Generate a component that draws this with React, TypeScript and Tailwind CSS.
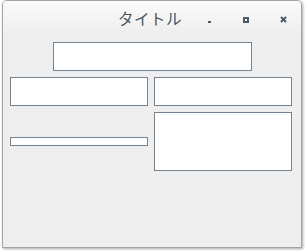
export default function App() {
  const field = 'bg-white border border-[#75828f]';
  return (
    <div className="w-[305px] h-[251px] bg-white" style={{ fontFamily: '"Noto Sans CJK JP", "Noto Sans", sans-serif' }}>
      <div className="ml-[2px] w-[300px] h-[248px] rounded-t-[5px] border border-[#a3a3a3] bg-[#eeeeee] shadow-[1px_1px_3px_rgba(0,0,0,0.35)] flex flex-col overflow-hidden">
        {/* title bar */}
        <div className="h-[34px] shrink-0 flex items-center bg-gradient-to-b from-[#fbfbfb] to-[#eeeeee] text-[#4a545e]">
          <span className="ml-[115px] text-[15.5px] leading-none tracking-[0.5px] mt-[1px]">タイトル</span>
          <span className="ml-[26px] mt-[7px] w-[3px] h-[2px] bg-[#4c5a66]" />
          <span className="ml-[32px] mt-[3px] w-[6px] h-[6px] border-[2px] border-[#4c5a66]" />
          <svg className="ml-[31px] mt-[3px]" width="7" height="7" viewBox="0 0 7 7">
            <path d="M1 1 L6 6 M6 1 L1 6" stroke="#4c5a66" strokeWidth="2" />
          </svg>
        </div>
        {/* content */}
        <div className="flex flex-col px-[7px] pt-[7px]">
          <div className="flex justify-center">
            <div className={`${field} w-[199px] h-[29px]`} />
          </div>
          <div className="flex gap-[6px] mt-[6px]">
            <div className="flex flex-col w-[138px]">
              <div className={`${field} h-[29px]`} />
              <div className={`${field} h-[9px] mt-[31px]`} />
            </div>
            <div className="flex flex-col w-[138px]">
              <div className={`${field} h-[29px]`} />
              <div className={`${field} h-[59px] mt-[6px]`} />
            </div>
          </div>
        </div>
      </div>
    </div>
  );
}
